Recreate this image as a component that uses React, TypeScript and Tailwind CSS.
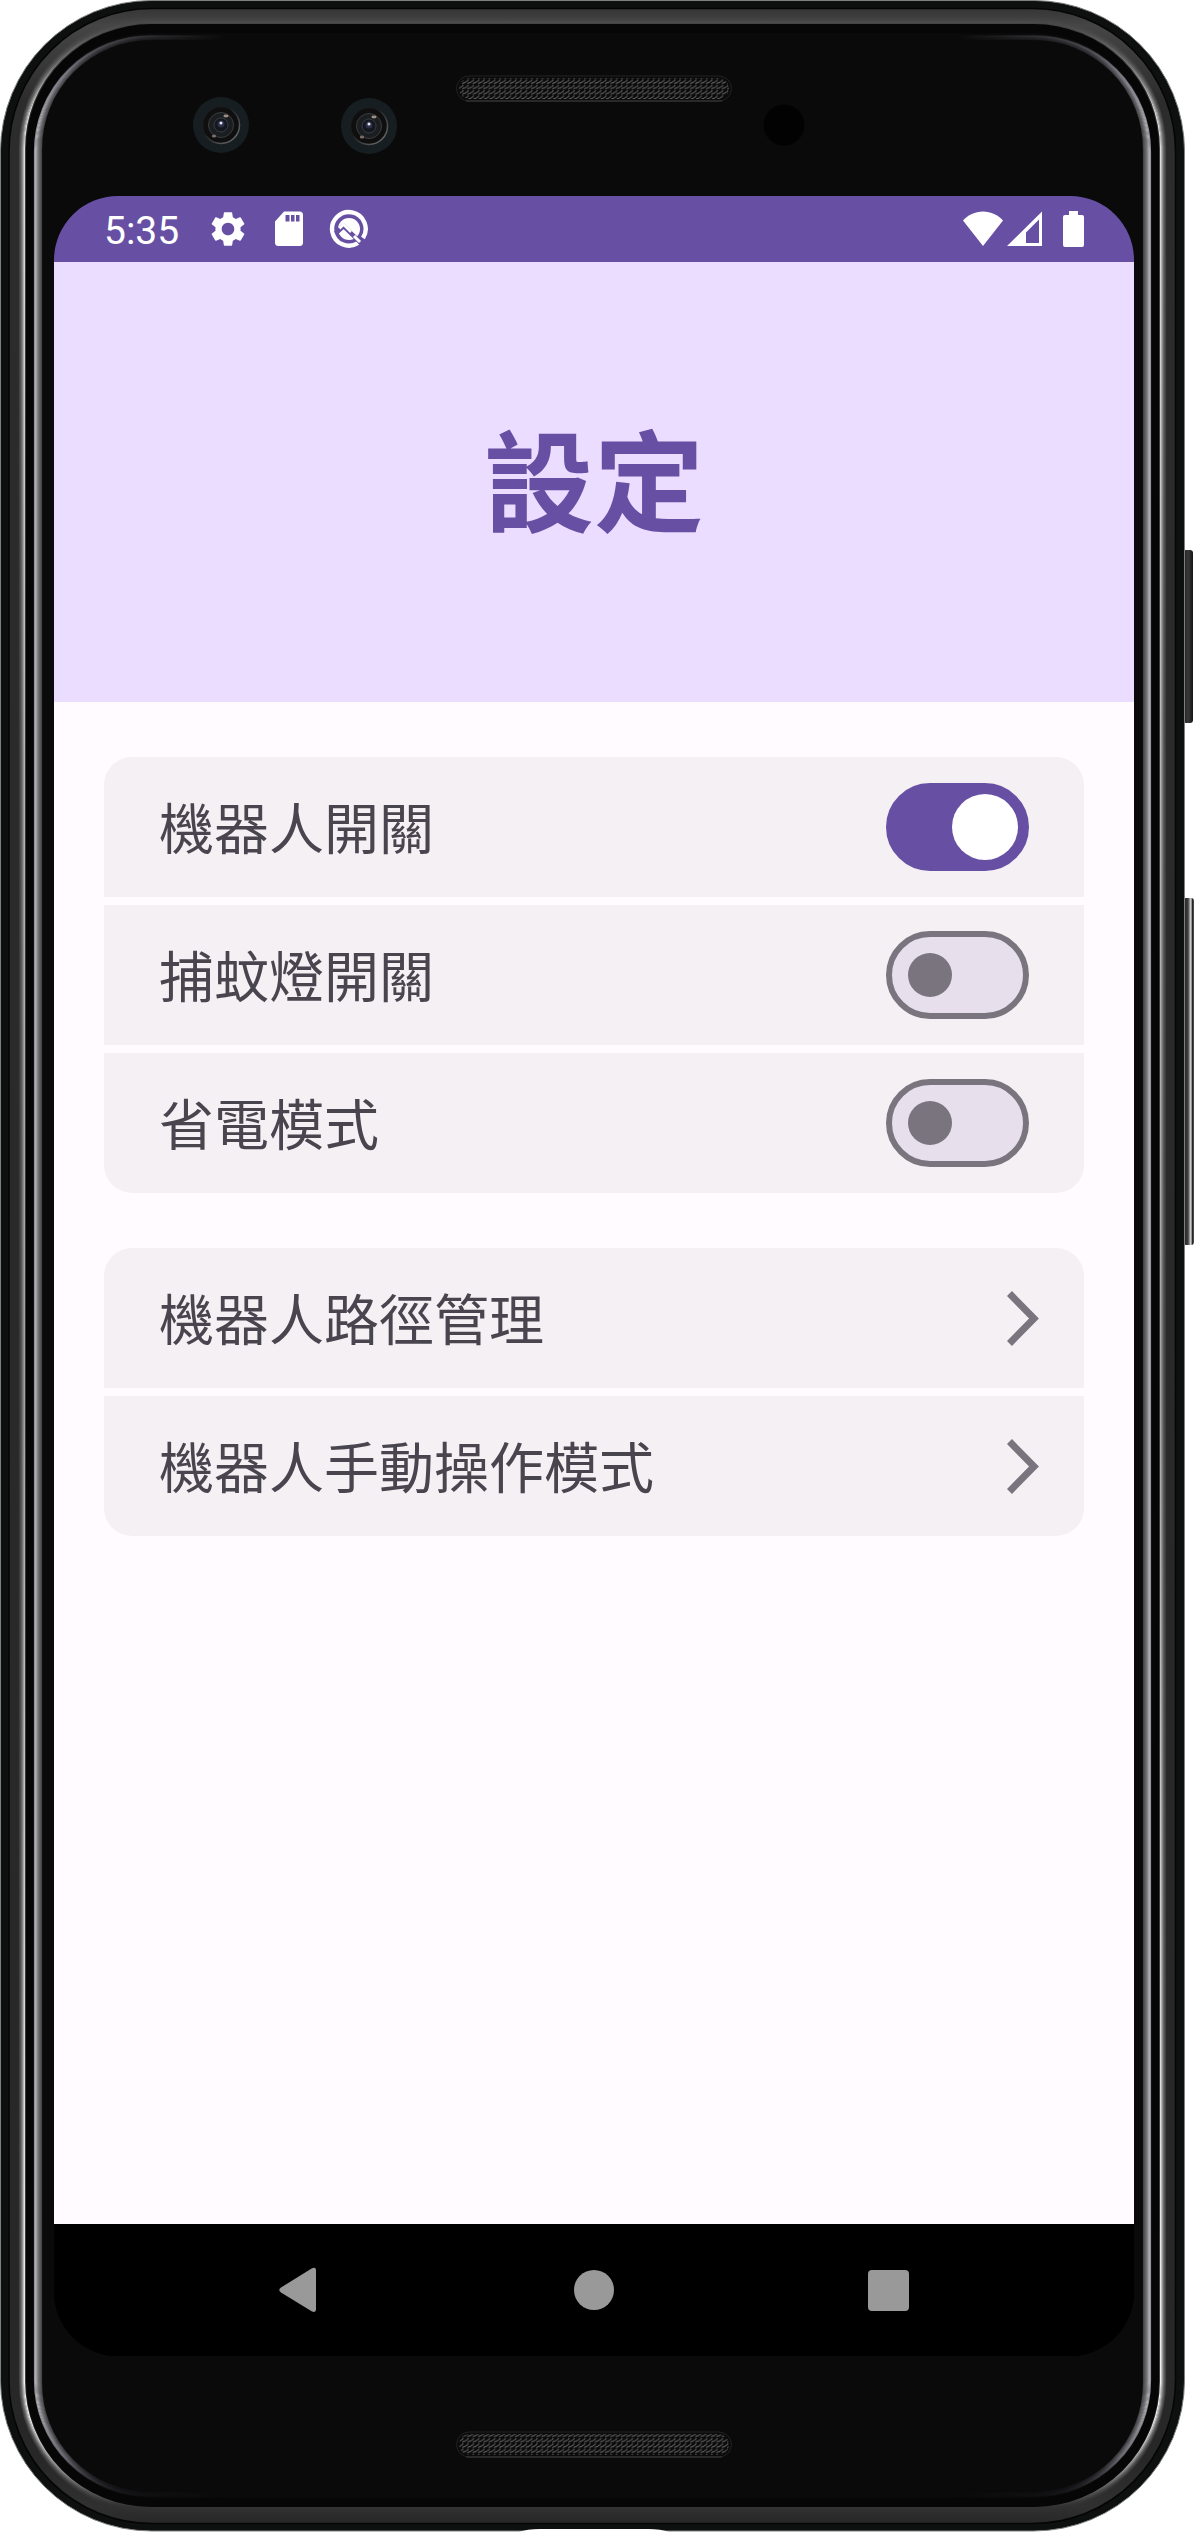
import { useState } from "react";
import { MdSettings } from "react-icons/md";

const CJK = "font-['Noto_Sans_CJK_TC',sans-serif]";

const metalRamp = [
  { inset: 19, opacity: 0.12 },
  { inset: 20, opacity: 0.2 },
  { inset: 21, opacity: 0.32 },
  { inset: 22, opacity: 0.5 },
  { inset: 23, opacity: 0.75 },
  { inset: 24, opacity: 1 },
];

const glassRamp = [
  { inset: 34, opacity: 0.75 },
  { inset: 35, opacity: 0.9 },
  { inset: 36, opacity: 0.8 },
  { inset: 37, opacity: 0.65 },
  { inset: 38, opacity: 0.52 },
  { inset: 39, opacity: 0.44 },
  { inset: 40, opacity: 0.38 },
  { inset: 41, opacity: 0.3 },
];

function Speaker({ y }: { y: number }) {
  return (
    <g>
      <rect x="456.5" y={y} width="275" height="25" rx="12.5" fill="#0b0b0b" stroke="#222" />
      <rect x="459" y={y + 2} width="270" height="21" rx="10.5" fill="url(#mesh)" />
      <path d={`M466 ${y + 25}H722`} stroke="#3d3d3d" />
    </g>
  );
}

function Camera({ cx, cy }: { cx: number; cy: number }) {
  return (
    <g>
      <circle cx={cx} cy={cy} r="28" fill="#171e22" />
      <circle cx={cx} cy={cy} r="18.5" fill="#0f0f10" stroke="url(#lensEdge)" strokeWidth="1.5" />
      <circle cx={cx} cy={cy} r="12.5" fill="#1a1e20" stroke="#3a3c3f" />
      <circle cx={cx} cy={cy} r="7" fill="#14171d" stroke="#3c3c44" />
      <circle cx={cx} cy={cy - 1} r="3.5" fill="#2c3048" />
      <circle cx={cx} cy={cy - 2} r="1.5" fill="#e8e8f4" />
      <ellipse cx={cx + 5} cy={cy - 9} rx="2.6" ry="1.4" fill="#a08e84" />
      <ellipse cx={cx - 7} cy={cy + 11} rx="2.2" ry="1.6" fill="#7d6c66" />
    </g>
  );
}

/* Phone shell: metal rim, glass edge, side keys, cameras and speakers. */
function DeviceShell() {
  return (
    <svg
      aria-hidden="true"
      className="pointer-events-none absolute inset-0 h-full w-full"
      viewBox="0 0 1194 2532"
      preserveAspectRatio="none"
    >
      <defs>
        <linearGradient id="rim" x1="0" y1="0" x2="0" y2="2532" gradientUnits="userSpaceOnUse">
          <stop offset="0" stopColor="#2e2e2e" />
          <stop offset="0.01" stopColor="#454545" />
          <stop offset="0.04" stopColor="#2c2c2c" />
          <stop offset="0.97" stopColor="#272727" />
          <stop offset="0.99" stopColor="#303030" />
          <stop offset="1" stopColor="#232323" />
        </linearGradient>
        <linearGradient id="shine" x1="0" y1="0" x2="0" y2="2532" gradientUnits="userSpaceOnUse">
          <stop offset="0.01" stopColor="#4a4a4a" />
          <stop offset="0.025" stopColor="#777" />
          <stop offset="0.045" stopColor="#ddd" />
          <stop offset="0.1" stopColor="#d8d8d8" />
          <stop offset="0.3" stopColor="#b4b4b4" />
          <stop offset="0.55" stopColor="#a4a4a4" />
          <stop offset="0.85" stopColor="#e2e2e2" />
          <stop offset="0.955" stopColor="#f2f2f2" />
          <stop offset="0.975" stopColor="#999" />
          <stop offset="0.99" stopColor="#333" />
        </linearGradient>
        <linearGradient id="glass" x1="0" y1="0" x2="0" y2="2532" gradientUnits="userSpaceOnUse">
          <stop offset="0.014" stopColor="#66656e" stopOpacity="0.3" />
          <stop offset="0.03" stopColor="#86858e" />
          <stop offset="0.05" stopColor="#bcbcc2" />
          <stop offset="0.95" stopColor="#bcbcc2" />
          <stop offset="0.97" stopColor="#76757e" />
          <stop offset="0.984" stopColor="#2c2b34" stopOpacity="0.3" />
          <stop offset="0.987" stopColor="#2c2b34" stopOpacity="0" />
        </linearGradient>
        <linearGradient id="glassFade" x1="0" y1="0" x2="1194" y2="0" gradientUnits="userSpaceOnUse">
          <stop offset="0.11" stopColor="#fff" />
          <stop offset="0.19" stopColor="#000" />
          <stop offset="0.8" stopColor="#000" />
          <stop offset="0.88" stopColor="#fff" />
        </linearGradient>
        <mask id="glassSides" maskUnits="userSpaceOnUse" x="0" y="0" width="1194" height="2532">
          <rect width="1194" height="2532" fill="url(#glassFade)" />
        </mask>
        <linearGradient id="lensEdge" x1="0" y1="0" x2="1" y2="1">
          <stop offset="0.4" stopColor="#1a1c1e" />
          <stop offset="1" stopColor="#77797a" />
        </linearGradient>
        <linearGradient id="keyDark" x1="0" y1="0" x2="1" y2="0">
          <stop offset="0" stopColor="#1a1a1a" />
          <stop offset="0.5" stopColor="#3a3a3a" />
          <stop offset="1" stopColor="#141414" />
        </linearGradient>
        <linearGradient id="keyBright" x1="0" y1="0" x2="1" y2="0">
          <stop offset="0" stopColor="#222" />
          <stop offset="0.45" stopColor="#3c3c3c" />
          <stop offset="0.72" stopColor="#e0e0e0" />
          <stop offset="0.85" stopColor="#222" />
          <stop offset="1" stopColor="#555" />
        </linearGradient>
        <pattern id="mesh" width="5.3" height="5.3" patternUnits="userSpaceOnUse">
          <path d="M0.2 2.2 2.2 0.2M1.2 4.6 2.6 3.2H4L5.2 1.8" fill="none" stroke="#606060" strokeWidth="1" />
        </pattern>
      </defs>

      <rect x="1183" y="550" width="10" height="173" rx="3" fill="url(#keyDark)" />
      <rect x="1183" y="898" width="11" height="347" rx="3" fill="url(#keyBright)" />

      <rect x="0.5" y="0.5" width="1184" height="2530.5" rx="151" fill="#101211" stroke="#7d807f" />
      <rect x="1.5" y="1.5" width="1182" height="2528.5" rx="150" fill="#0e100f" />
      <rect x="9" y="8.5" width="1166.5" height="2515" rx="143" fill="url(#rim)" stroke="#050505" strokeWidth="1.5" />
      <g fill="none" stroke="url(#shine)" strokeWidth="1.2">
        {metalRamp.map(({ inset, opacity }) => (
          <rect
            key={inset}
            x={inset + 0.5}
            y={inset - 1.5}
            width={1184 - inset * 2}
            height={2533 - inset * 2}
            rx={150 - inset}
            strokeOpacity={opacity}
          />
        ))}
      </g>
      <rect x="26" y="24" width="1133" height="2483" rx="125" fill="#060606" />
      <rect x="34" y="33" width="1117" height="2465" rx="116" fill="#0a0a0a" />
      <g fill="none" stroke="url(#glass)" strokeWidth="1.2" mask="url(#glassSides)">
        {glassRamp.map(({ inset, opacity }) => (
          <rect
            key={inset}
            x={inset + 0.5}
            y={35.5 + (inset - 34) * 0.6}
            width={1184 - inset * 2}
            height={2461 - (inset - 34) * 1.2}
            rx={150 - inset}
            strokeOpacity={opacity}
          />
        ))}
      </g>

      <path d="M519 2532Q527 2529 540 2529H648Q661 2529 669 2532Z" fill="#fff" />

      <Camera cx={221} cy={125} />
      <Camera cx={369} cy={126} />
      <circle cx="784" cy="125" r="20.5" fill="#020202" />
      <Speaker y={76} />
      <Speaker y={2432} />
    </svg>
  );
}

function SdCardIcon() {
  return (
    <svg aria-hidden="true" className="h-9 w-10" viewBox="1 0 40 36">
      <path
        fillRule="evenodd"
        fill="currentColor"
        d="M16 .5H31.500A3.500 3.500 0 0 1 35 4V31.500A3.500 3.500 0 0 1 31.500 35H10.500A3.500 3.500 0 0 1 7 31.500V10.500ZM17.500 4V10.500H21.500V4ZM23 4V10.500H26.500V4ZM28 4V10.500H31.500V4Z"
      />
    </svg>
  );
}

function DebugIcon() {
  return (
    <svg aria-hidden="true" className="size-10" viewBox="0 0 40 40" fill="none">
      <path d="M29 34A16.800 16.800 0 1 1 34 29" stroke="currentColor" strokeWidth="4.400" />
      <circle cx="20" cy="20" r="11" fill="currentColor" />
      <path d="M6.500 24.500 14.500 17 35 37" stroke="#6750a4" strokeWidth="4.500" />
      <path d="M10.500 19.500 14.500 15.500 22 23" stroke="currentColor" strokeWidth="2.500" />
      <path d="M25 27 31 33" stroke="currentColor" strokeWidth="3" />
    </svg>
  );
}

function StatusBar() {
  return (
    <div className="flex h-[66px] items-center justify-between bg-[#6750a4] px-[50px] text-white">
      <div className="flex items-center gap-5">
        <span className="mr-2 pt-1 font-['Roboto',sans-serif] text-[39px] leading-none">5:35</span>
        <MdSettings aria-hidden="true" className="size-[42px]" />
        <SdCardIcon />
        <DebugIcon />
      </div>
      <div className="flex items-center gap-1">
        <svg aria-hidden="true" className="h-9 w-10" viewBox="0 0 40 36">
          <path fill="currentColor" d="M0 9.500C5 4 12 .5 20 .5S35 4 40 9.500L20 35Z" />
        </svg>
        <svg aria-hidden="true" className="h-9 w-9" viewBox="0 0 36 36">
          <path fill="currentColor" fillRule="evenodd" d="M35 .5V35H0ZM32 8.500 19 21.500V32H32Z" />
        </svg>
        <svg aria-hidden="true" className="ml-4 h-9 w-[21px]" viewBox="0 0 21 36">
          <path
            fill="currentColor"
            d="M6 0H15V4H19Q21 4 21 6V34Q21 36 19 36H2Q0 36 0 34V6Q0 4 2 4H6Z"
          />
        </svg>
      </div>
    </div>
  );
}

const rowClass =
  "flex h-[140px] w-full items-center justify-between bg-[#f4f0f4] px-[55px] text-[55px] leading-none text-[#49454f]";

function SwitchRow({ id, label, initial }: { id: string; label: string; initial: boolean }) {
  const [on, setOn] = useState(initial);
  return (
    <div className={rowClass}>
      <label htmlFor={id} className="pb-1">
        {label}
      </label>
      <input
        id={id}
        type="checkbox"
        role="switch"
        checked={on}
        onChange={(e) => setOn(e.target.checked)}
        className="flex h-[88px] w-[143px] shrink-0 cursor-pointer appearance-none items-center rounded-full border-6 border-[#79747e] bg-[#e7e0ec] pl-4 before:size-11 before:rounded-full before:bg-[#79747e] before:content-[''] checked:justify-end checked:border-[#6750a4] checked:bg-[#6750a4] checked:pr-[5px] checked:before:size-[66px] checked:before:bg-white"
      />
    </div>
  );
}

function LinkRow({ label }: { label: string }) {
  return (
    <button type="button" className={rowClass}>
      <span className="pb-1">{label}</span>
      <svg aria-hidden="true" className="-mr-[10px] h-[55px] w-8" viewBox="0 0 32 55">
        <path d="M2.500 2.500 27 27.500 2.500 52.500" fill="none" stroke="#79747e" strokeWidth="7" />
      </svg>
    </button>
  );
}

function NavBar() {
  return (
    <nav className="grid h-[132px] grid-cols-3 place-items-center bg-black px-[98px] text-[#999]">
      <button type="button" aria-label="返回" className="grid size-16 place-items-center">
        <svg aria-hidden="true" className="h-[46px] w-10" viewBox="0 0 40 46">
          <path
            d="M2 20.500 33 1.200Q37 -.5 37 3.500V42.500Q37 46 33 44.500L2 25.500Q-1.500 23 2 20.500Z"
            fill="currentColor"
          />
        </svg>
      </button>
      <button type="button" aria-label="主畫面" className="grid size-16 place-items-center">
        <span className="size-10 rounded-full bg-[#999]" />
      </button>
      <button type="button" aria-label="最近使用" className="grid size-16 place-items-center">
        <span className="size-[41px] rounded bg-[#999]" />
      </button>
    </nav>
  );
}

export default function App() {
  return (
    <div className={`relative flex min-h-screen w-full flex-col bg-white pt-[196px] pr-[60px] pb-[176px] pl-[54px] ${CJK}`}>
      <DeviceShell />
      <div className="relative flex flex-1 flex-col overflow-hidden rounded-[64px] bg-black">
        <StatusBar />
        <header className="flex h-[440px] items-center justify-center bg-[#eaddff]">
          <h1 className="pb-3 text-[110px] leading-none font-bold text-[#6750a4]">設定</h1>
        </header>
        <main className="flex flex-1 flex-col gap-[55px] bg-[#fffbff] px-[50px] py-[55px]">
          <section className="flex flex-col gap-2 overflow-hidden rounded-[28px]">
            <SwitchRow id="robot" label="機器人開關" initial={true} />
            <SwitchRow id="lamp" label="捕蚊燈開關" initial={false} />
            <SwitchRow id="saver" label="省電模式" initial={false} />
          </section>
          <section className="flex flex-col gap-2 overflow-hidden rounded-[28px]">
            <LinkRow label="機器人路徑管理" />
            <LinkRow label="機器人手動操作模式" />
          </section>
        </main>
        <NavBar />
      </div>
    </div>
  );
}
